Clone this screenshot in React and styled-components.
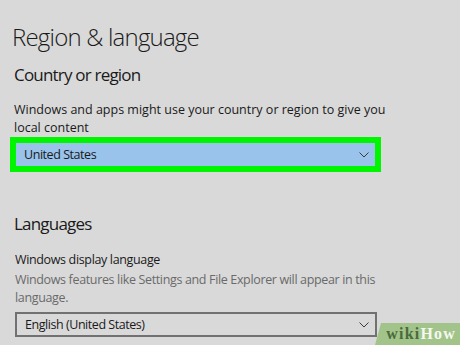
import styled, { createGlobalStyle } from 'styled-components';

const GlobalStyle = createGlobalStyle`
	html, body {
		margin: 0;
		padding: 0;
		background: #d9d9d9;
	}
	body {
		font-family: 'Open Sans', 'Noto Sans', sans-serif;
		color: #1a1a1a;
	}
`;

const Page = styled.div`
	position: relative;
	width: 460px;
	height: 345px;
	overflow: hidden;
	padding: 22px 0 0 12px;
	box-sizing: border-box;
`;

const Title = styled.h1`
	margin: 0;
	font-size: 24px;
	font-weight: 300;
	line-height: 30px;
	letter-spacing: -0.8px;
	color: #1a1a1a;
`;

const SectionTitle = styled.h2`
	margin: ${(p) => p.$top || 0}px 0 0 2px;
	font-size: 17px;
	font-weight: 400;
	line-height: 22px;
	letter-spacing: -0.8px;
	color: #1a1a1a;
`;

const Label = styled.p`
	margin: ${(p) => p.$top || 0}px 0 0 ${(p) => (p.$tight ? 3 : 2)}px;
	width: 375px;
	font-size: 12.5px;
	line-height: 18px;
	letter-spacing: ${(p) => (p.$tight ? '-0.35px' : '0')};
	color: ${(p) => (p.$muted ? '#6a6a6a' : '#1a1a1a')};
`;

const Highlight = styled.div`
	margin: 0 0 0 -2px;
	width: 371px;
	border: 6px solid #00f600;
	box-sizing: border-box;
`;

const Select = styled.div`
	display: flex;
	align-items: center;
	justify-content: space-between;
	height: ${(p) => (p.$framed ? 25 : 23)}px;
	width: ${(p) => (p.$framed ? '362px' : 'auto')};
	margin: ${(p) => (p.$framed ? '5px 0 0 3px' : 0)};
	padding: 0 6px 0 8px;
	box-sizing: border-box;
	background: ${(p) => (p.$framed ? 'transparent' : '#99c3eb')};
	border: ${(p) => (p.$framed ? '2px solid #717171' : 'none')};
	font-size: 12.5px;
	letter-spacing: -0.45px;
	color: #1a1a1a;
`;

const Chevron = () => (
	<svg width="10" height="6" viewBox="0 0 10 6" fill="none">
		<path d="M0.5 0.5l4.5 4.5L9.5 0.5" stroke="#3a3a3a" strokeWidth="1" />
	</svg>
);

const Badge = styled.div`
	position: absolute;
	right: 0;
	bottom: 0;
	width: 85px;
	height: 22px;
	background: #a2c48a;
	clip-path: polygon(6px 0, 100% 0, 100% 100%, 0 100%);
	display: flex;
	align-items: center;
	justify-content: flex-end;
	padding-right: 4px;
	box-sizing: border-box;
	font-family: 'Liberation Serif', serif;
	font-weight: 700;
	font-size: 16px;
	letter-spacing: 1.2px;
`;

const Wiki = styled.span`
	color: #4a6a3c;
`;

const How = styled.span`
	color: #f4f8ef;
`;

export default function App() {
	return (
		<Page>
			<GlobalStyle />
			<Title>Region &amp; language</Title>
			<SectionTitle $top={12}>Country or region</SectionTitle>
			<Label $top={15}>
				Windows and apps might use your country or region to give you local content
			</Label>
			<Highlight>
				<Select>
					United States
					<Chevron />
				</Select>
			</Highlight>
			<SectionTitle $top={41}>Languages</SectionTitle>
			<Label $top={16} $tight>Windows display language</Label>
			<Label $top={2} $muted $tight>
				Windows features like Settings and File Explorer will appear in this language.
			</Label>
			<Select $framed>
				English (United States)
				<Chevron />
			</Select>
			<Badge>
				<Wiki>wiki</Wiki>
				<How>How</How>
			</Badge>
		</Page>
	);
}
